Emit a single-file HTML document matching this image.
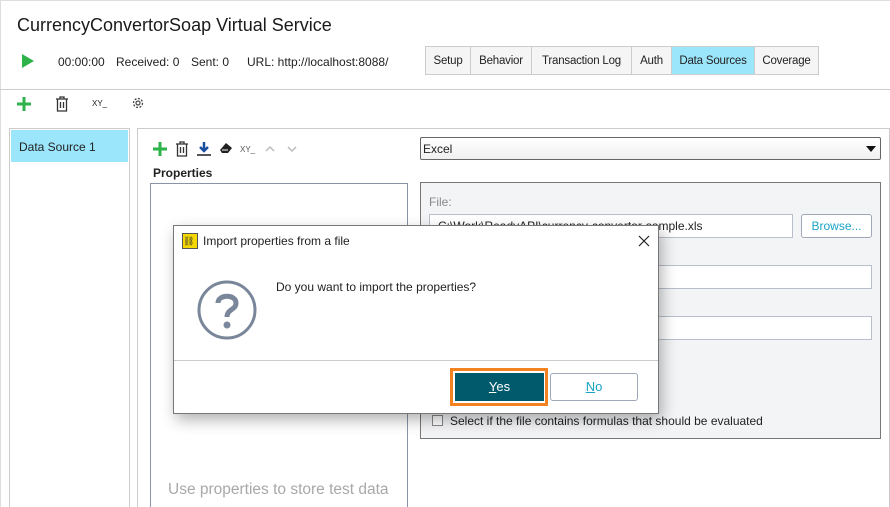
<!DOCTYPE html>
<html><head><meta charset="utf-8"><style>
*{box-sizing:border-box;margin:0;padding:0}
html,body{width:890px;height:507px;overflow:hidden}
body{background:#fff;font-family:"Liberation Sans",sans-serif;font-size:12px;color:#222;position:relative}
.a{position:absolute}
.tab{position:absolute;top:46px;height:29px;border:1px solid #ccc;background:#f5f5f5;line-height:29px;text-align:center;font-size:11.5px;letter-spacing:-0.2px}
.inp{position:absolute;background:#fff;border:1px solid #b8bfca}
</style></head><body>
<div class="a" style="left:0;top:0;width:890px;height:1px;background:#ddd"></div>
<div class="a" style="left:0;top:0;width:1px;height:507px;background:#ddd"></div>
<div class="a" style="left:17px;top:15px;font-size:18px;color:#1a1a1a">CurrencyConvertorSoap Virtual Service</div>
<svg class="a" style="left:21px;top:53px" width="14" height="16"><path d="M1 1L13 8L1 15Z" fill="#2db34a"/></svg>
<div class="a" style="left:58px;top:55px">00:00:00</div>
<div class="a" style="left:116px;top:55px">Received: 0</div>
<div class="a" style="left:191px;top:55px">Sent: 0</div>
<div class="a" style="left:247px;top:55px">URL: http://localhost:8088/</div>
<div class="tab" style="left:425px;width:46px">Setup</div>
<div class="tab" style="left:470px;width:62px">Behavior</div>
<div class="tab" style="left:531px;width:101px">Transaction Log</div>
<div class="tab" style="left:631px;width:41px">Auth</div>
<div class="tab" style="left:671px;width:84px;background:#9be6fb">Data Sources</div>
<div class="tab" style="left:754px;width:65px">Coverage</div>
<div class="a" style="left:0;top:89px;width:890px;height:1px;background:#ccc"></div>
<svg class="a" style="left:16px;top:96px" width="16" height="16"><path d="M8 1V15M1 8H15" stroke="#2db34a" stroke-width="3"/></svg>
<svg class="a" style="left:55px;top:96px" width="14" height="16"><path d="M1 3H13M5 3V1H9V3M2.5 3V15H11.5V3M5.5 6V12M8.5 6V12" stroke="#333" stroke-width="1.3" fill="none"/></svg>
<div class="a" style="left:92px;top:99px;font-size:8px">XY_</div>
<svg class="a" style="left:131px;top:96px" width="14" height="14"><circle cx="7" cy="7" r="4.5" stroke="#444" stroke-width="1.3" fill="none" stroke-dasharray="2 1.5"/><circle cx="7" cy="7" r="2" stroke="#444" stroke-width="1.2" fill="none"/></svg>
<div class="a" style="left:9px;top:128px;width:121px;height:380px;border:1px solid #ccc;border-bottom:none"></div>
<div class="a" style="left:11px;top:130px;width:117px;height:32px;background:#9be6fb;padding:10px 8px;font-size:12px">Data Source 1</div>
<div class="a" style="left:137px;top:128px;width:753px;height:380px;border:1px solid #ccc;border-bottom:none"></div>
<svg class="a" style="left:152px;top:141px" width="16" height="16"><path d="M8 1V15M1 8H15" stroke="#2db34a" stroke-width="3"/></svg>
<svg class="a" style="left:175px;top:141px" width="14" height="16"><path d="M1 3H13M5 3V1H9V3M2.5 3V15H11.5V3M5.5 6V12M8.5 6V12" stroke="#333" stroke-width="1.3" fill="none"/></svg>
<svg class="a" style="left:196px;top:141px" width="16" height="16"><path d="M8 1V10M4 6L8 10L12 6" stroke="#1a4fa0" stroke-width="2.5" fill="none"/><path d="M1 14H15" stroke="#555" stroke-width="2"/></svg>
<svg class="a" style="left:219px;top:142px" width="14" height="13"><path d="M7 1L13 6L9 11H3L1 8Z" fill="#222"/><path d="M3 8H9" stroke="#fff"/></svg>
<div class="a" style="left:240px;top:145px;font-size:8px;color:#555">XY_</div>
<svg class="a" style="left:265px;top:145px" width="10" height="8"><path d="M1 6L5 2L9 6" stroke="#bbb" stroke-width="1.5" fill="none"/></svg>
<svg class="a" style="left:287px;top:145px" width="10" height="8"><path d="M1 2L5 6L9 2" stroke="#bbb" stroke-width="1.5" fill="none"/></svg>
<div class="a" style="left:153px;top:166px;font-weight:bold;font-size:12px">Properties</div>
<div class="a" style="left:150px;top:183px;width:258px;height:330px;border:1px solid #8a94a6"></div>
<div class="a" style="left:168px;top:481px;font-size:15.5px;color:#a8a8a8">Use properties to store test data</div>
<div class="a" style="left:420px;top:137px;width:461px;height:23px;border:1px solid #666;border-radius:2px;background:linear-gradient(#fff,#f0f0f0);padding:4px 2px;font-size:12px">Excel<svg style="position:absolute;right:4px;top:8px" width="10" height="6"><path d="M0 0H10L5 6Z" fill="#111"/></svg></div>
<div class="a" style="left:420px;top:182px;width:461px;height:257px;border:1px solid #777;background:#f3f4f6"></div>
<div class="a" style="left:429px;top:195px;color:#888">File:</div>
<div class="inp" style="left:429px;top:214px;width:364px;height:24px;padding:4px 8px">C:\Work\ReadyAPI\currency-convertor-sample.xls</div>
<div class="a" style="left:801px;top:214px;width:71px;height:24px;border:1px solid #a0a8b8;border-radius:3px;background:#fff;color:#1aa3c4;text-align:center;line-height:22px">Browse...</div>
<div class="inp" style="left:429px;top:265px;width:443px;height:24px"></div>
<div class="inp" style="left:429px;top:316px;width:443px;height:24px"></div>
<div class="a" style="left:432px;top:415px;width:11px;height:11px;border:1px solid #888;background:#fff"></div>
<div class="a" style="left:450px;top:414px">Select if the file contains formulas that should be evaluated</div>
<div class="a" style="left:173px;top:225px;width:486px;height:189px;border:1px solid #777;background:#fff;box-shadow:3px 6px 14px rgba(0,0,0,.3)">
 <div class="a" style="left:8px;top:7px;width:16px;height:16px;background:#f5d800;border:1px solid #555;font-size:9px;line-height:14px;color:#333">⛓</div>
 <div class="a" style="left:29px;top:8px;font-size:12px">Import properties from a file</div>
 <svg class="a" style="left:464px;top:9px" width="12" height="12"><path d="M1 1L11 11M11 1L1 11" stroke="#222" stroke-width="1.2"/></svg>
 <svg class="a" style="left:22px;top:53px" width="62" height="62"><circle cx="31" cy="31" r="28" stroke="#7a869a" stroke-width="3" fill="none"/><path d="M22 24C22 15 40 15 40 24C40 31 31 30 31 38" stroke="#7a869a" stroke-width="5" fill="none"/><circle cx="31" cy="46" r="3.5" fill="#7a869a"/></svg>
 <div class="a" style="left:102px;top:54px;font-size:12px">Do you want to import the properties?</div>
 <div class="a" style="left:0;top:134px;width:484px;height:1px;background:#ccc"></div>
 <div class="a" style="left:276px;top:142px;width:98px;height:38px;border:3px solid #f58220"></div>
 <div class="a" style="left:281px;top:147px;width:89px;height:28px;background:#015a6b;color:#fff;text-align:center;line-height:28px;font-size:13px"><u>Y</u>es</div>
 <div class="a" style="left:376px;top:147px;width:88px;height:28px;border:1px solid #a0a8b8;border-radius:3px;color:#1aa3c4;text-align:center;line-height:26px;font-size:13px"><u>N</u>o</div>
</div>
</body></html>
